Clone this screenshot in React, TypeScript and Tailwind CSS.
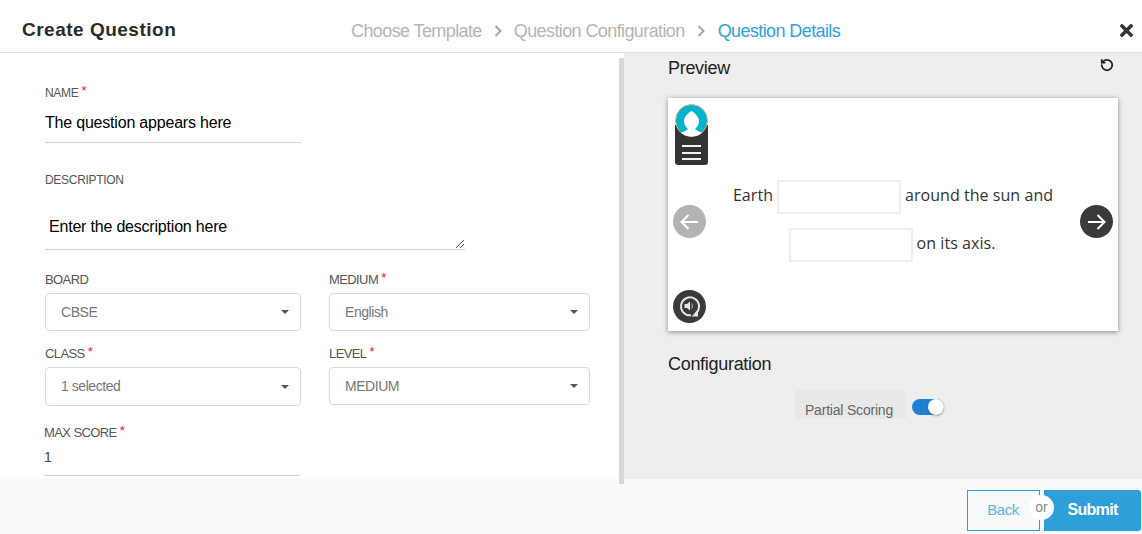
import { FaTimes } from "react-icons/fa";
import { LuRotateCcw } from "react-icons/lu";

function Label({ text, required, big }: { text: string; required?: boolean; big?: boolean }) {
    return (
        <div className={`flex items-start h-[18px] leading-[18px] text-[#555555] ${big ? "text-[13px] tracking-[-0.6px]" : "text-[12px] tracking-[-0.3px]"}`}>
            <span>{text}</span>
            {required && <span className="ml-[3px] text-[#e8202a] text-[13px] leading-[13px] tracking-normal">*</span>}
        </div>
    );
}

function SelectBox({ label, value, required, width, height }: { label: string; value: string; required?: boolean; width: string; height: string }) {
    return (
        <div className={width}>
            <Label text={label} required={required} big />
            <div className={`${height} mt-[4px] flex items-center justify-between pl-[15px] pr-[11px] bg-white border border-[#d9d9d9] rounded-[4px] text-[14px] tracking-[-0.45px] text-[#777777]`}>
                <span>{value}</span>
                <span className="w-0 h-0 border-x-[4px] border-x-transparent border-t-[4px] border-t-[#555555]"></span>
            </div>
        </div>
    );
}

export default function App() {
    return (
        <div className="w-[1142px] h-[534px] overflow-hidden bg-white font-['Liberation_Sans',Arial,sans-serif]">
            {/* Header */}
            <div className="h-[53px] flex items-center border-b border-[#dddddd] pt-[8px] pl-[22px] pr-[6px]">
                <div className="w-[329px] text-[19px] font-bold tracking-[0.5px] text-[#2b2b2b]">Create Question</div>
                <div className="mt-[2px] flex items-center text-[18px] tracking-[-0.6px] text-[#b5b5b5]">
                    <span>Choose Template</span>
                    <Chevron />
                    <span>Question Configuration</span>
                    <Chevron />
                    <span className="ml-[1px] text-[#2fa3dc]">Question Details</span>
                </div>
                <FaTimes className="ml-auto text-[19px] text-[#333333]" />
            </div>

            {/* Body */}
            <div className="h-[426px] flex">
                <div className="w-[619px] shrink-0 pl-[45px] pt-[31px]">
                    <Label text="NAME" required />
                    <div className="mt-[11px] h-[29px] w-[256px] border-b border-[#d4d4d4] text-[16px] leading-[20px] tracking-[-0.2px] text-black box-content">The question appears here</div>
                    <div className="mt-[28px]"><Label text="DESCRIPTION" /></div>
                    <div className="mt-[28px] relative h-[32px] w-[416px] pl-[4px] border-b border-[#d4d4d4] text-[16px] leading-[20px] tracking-[-0.2px] text-black box-content">
                        Enter the description here
                        <svg className="absolute right-0 bottom-0" width="10" height="10" viewBox="0 0 10 10">
                            <path d="M1 9 L9 1 M5 9 L9 5" stroke="#555555" strokeWidth="1" fill="none" />
                        </svg>
                    </div>
                    <div className="mt-[21px] flex gap-[28px]">
                        <SelectBox label="BOARD" value="CBSE" width="w-[256px]" height="h-[38px]" />
                        <SelectBox label="MEDIUM" value="English" required width="w-[261px]" height="h-[38px]" />
                    </div>
                    <div className="mt-[14px] flex gap-[28px]">
                        <SelectBox label="CLASS" value="1 selected" required width="w-[256px]" height="h-[39px]" />
                        <SelectBox label="LEVEL" value="MEDIUM" required width="w-[261px]" height="h-[38px]" />
                    </div>
                    <div className="mt-[18px] -ml-[1px]"><Label text="MAX SCORE" required big /></div>
                    <div className="-ml-[1px] mt-[5px] h-[29px] w-[256px] border-b border-[#d4d4d4] text-[14px] leading-[20px] text-[#444444]">1</div>
                </div>

                {/* Scrollbar */}
                <div className="w-[5px] h-[426px] mt-[5px] shrink-0 bg-[#d8d8d8] relative z-10"></div>

                {/* Preview */}
                <div className="flex-1 bg-[#eeeeee] pl-[44px] pr-[24px]">
                    <div className="h-[45px] pt-[5px] flex items-start justify-between">
                        <span className="text-[18px] leading-[21px] tracking-[-0.3px] text-[#222222]">Preview</span>
                        <LuRotateCcw className="mr-[4px] text-[14px] text-[#222222] stroke-[3]" />
                    </div>
                    <div className="relative w-[450px] h-[233px] bg-white shadow-[0_1px_5px_rgba(0,0,0,0.45)] font-['Open_Sans',sans-serif] text-[16px] tracking-[0.05px] text-[#333333]">
                        <div className="absolute left-[7px] top-[27px] w-[33px] h-[40px] bg-[#333333] rounded-b-[3px] flex flex-col justify-end gap-[4.5px] px-[7px] pb-[5px]">
                            <span className="h-[2px] bg-[#f2f2f2]"></span>
                            <span className="h-[2px] bg-[#f2f2f2]"></span>
                            <span className="h-[2px] bg-[#f2f2f2]"></span>
                        </div>
                        <svg className="absolute left-[7px] top-[6px]" width="33" height="33" viewBox="0 0 33 33">
                            <circle cx="16.5" cy="16.5" r="16" fill="#00b3cb" stroke="#c8bd8f" strokeWidth="1" />
                            <path d="M16.5 7 C20 9 24 13 24 17 C24 21 21.5 23.5 20 25 C22 27 25 27.5 27 29 C24 31.5 20 32.5 16.5 32.5 C13 32.5 9 31.5 6 29 C8 27.5 11 27 13 25 C11.5 23.5 9 21 9 17 C9 13 13 9 16.5 7 Z" fill="#ffffff" />
                        </svg>
                        <div className="pt-[82px] flex flex-col items-center gap-[14px]">
                            <div className="flex items-center h-[34px]">
                                <span className="mb-[4px]">Earth</span>
                                <span className="w-[124px] h-[34px] mx-[4px] bg-white border-2 border-[#eeeeee]"></span>
                                <span className="mb-[4px]">around the sun and</span>
                            </div>
                            <div className="flex items-center h-[34px] pr-[2px]">
                                <span className="w-[124px] h-[34px] mr-[4px] bg-white border-2 border-[#eeeeee]"></span>
                                <span className="mb-[4px]">on its axis.</span>
                            </div>
                        </div>
                        <div className="absolute left-[5px] top-[107px] w-[33px] h-[33px] rounded-full bg-[#b3b3b3] flex items-center justify-center">
                            <Arrow flip />
                        </div>
                        <div className="absolute left-[412px] top-[107px] w-[33px] h-[33px] rounded-full bg-[#3a3a3a] flex items-center justify-center">
                            <Arrow />
                        </div>
                        <div className="absolute left-[5px] top-[192px] w-[33px] h-[33px] rounded-full bg-[#3a3a3a] flex items-center justify-center">
                            <svg width="23" height="23" viewBox="0 0 23 23" fill="none">
                                <path d="M17.5 18.5 A9 9 0 1 0 13 20.3" stroke="#e6e6e6" strokeWidth="2" />
                                <path d="M20 15 L20 21.5 L13.5 21.5 Z" fill="#e6e6e6" />
                                <path d="M6.5 9 H9 L12 6.5 V15.5 L9 13 H6.5 Z" fill="#e6e6e6" />
                                <path d="M13.5 8.5 Q15.5 11 13.5 13.5" stroke="#9a9a9a" strokeWidth="1.2" />
                            </svg>
                        </div>
                    </div>
                    <div className="mt-[23px] text-[18px] leading-[21px] tracking-[-0.3px] text-[#222222]">Configuration</div>
                    <div className="mt-[15px] ml-[127px] flex items-start">
                        <div className="w-[111px] h-[29px] bg-[#e8e8e8] rounded-t-[3px] flex justify-center pt-[11px] pr-[3px] text-[14px] leading-[18px] tracking-[-0.2px] text-[#666666]">Partial Scoring</div>
                        <div className="ml-[6px] mt-[9px] w-[32px] h-[16px] rounded-full bg-[#1f7fd1] flex justify-end">
                            <span className="w-[16px] h-[16px] rounded-full bg-white shadow-[0_1px_2px_rgba(0,0,0,0.3)]"></span>
                        </div>
                    </div>
                </div>
            </div>

            {/* Footer */}
            <div className="relative z-0 h-[55px] bg-[#f8f9fb] flex items-start justify-end pt-[11px] pr-[1px]">
                <div className="relative flex">
                    <div className="w-[73px] h-[41px] pr-[1px] border border-[#2e9fd9] text-[#5cb4e2] text-[15px] tracking-[-0.4px] flex items-center justify-center">Back</div>
                    <div className="w-[97px] h-[41px] ml-[4px] pb-[1px] bg-[#2e9fd9] rounded-r-[3px] text-white text-[16px] font-bold tracking-[-0.7px] flex items-center justify-center">Submit</div>
                    <div className="absolute left-[62px] top-[5px] w-[25px] h-[25px] rounded-full bg-white text-[#888888] text-[14px] flex items-center justify-center">or</div>
                </div>
            </div>
        </div>
    );
}

function Chevron() {
    return (
        <svg className="mx-[12px]" width="8" height="12" viewBox="0 0 8 12" fill="none">
            <path d="M1.5 1 L6.5 6 L1.5 11" stroke="#a8a8a8" strokeWidth="2" />
        </svg>
    );
}

function Arrow({ flip }: { flip?: boolean }) {
    return (
        <svg className={flip ? "rotate-180" : ""} width="19" height="16" viewBox="0 0 19 16" fill="none">
            <path d="M1 8 H17.5 M10.5 1 L17.5 8 L10.5 15" stroke="#ffffff" strokeWidth="2" />
        </svg>
    );
}
